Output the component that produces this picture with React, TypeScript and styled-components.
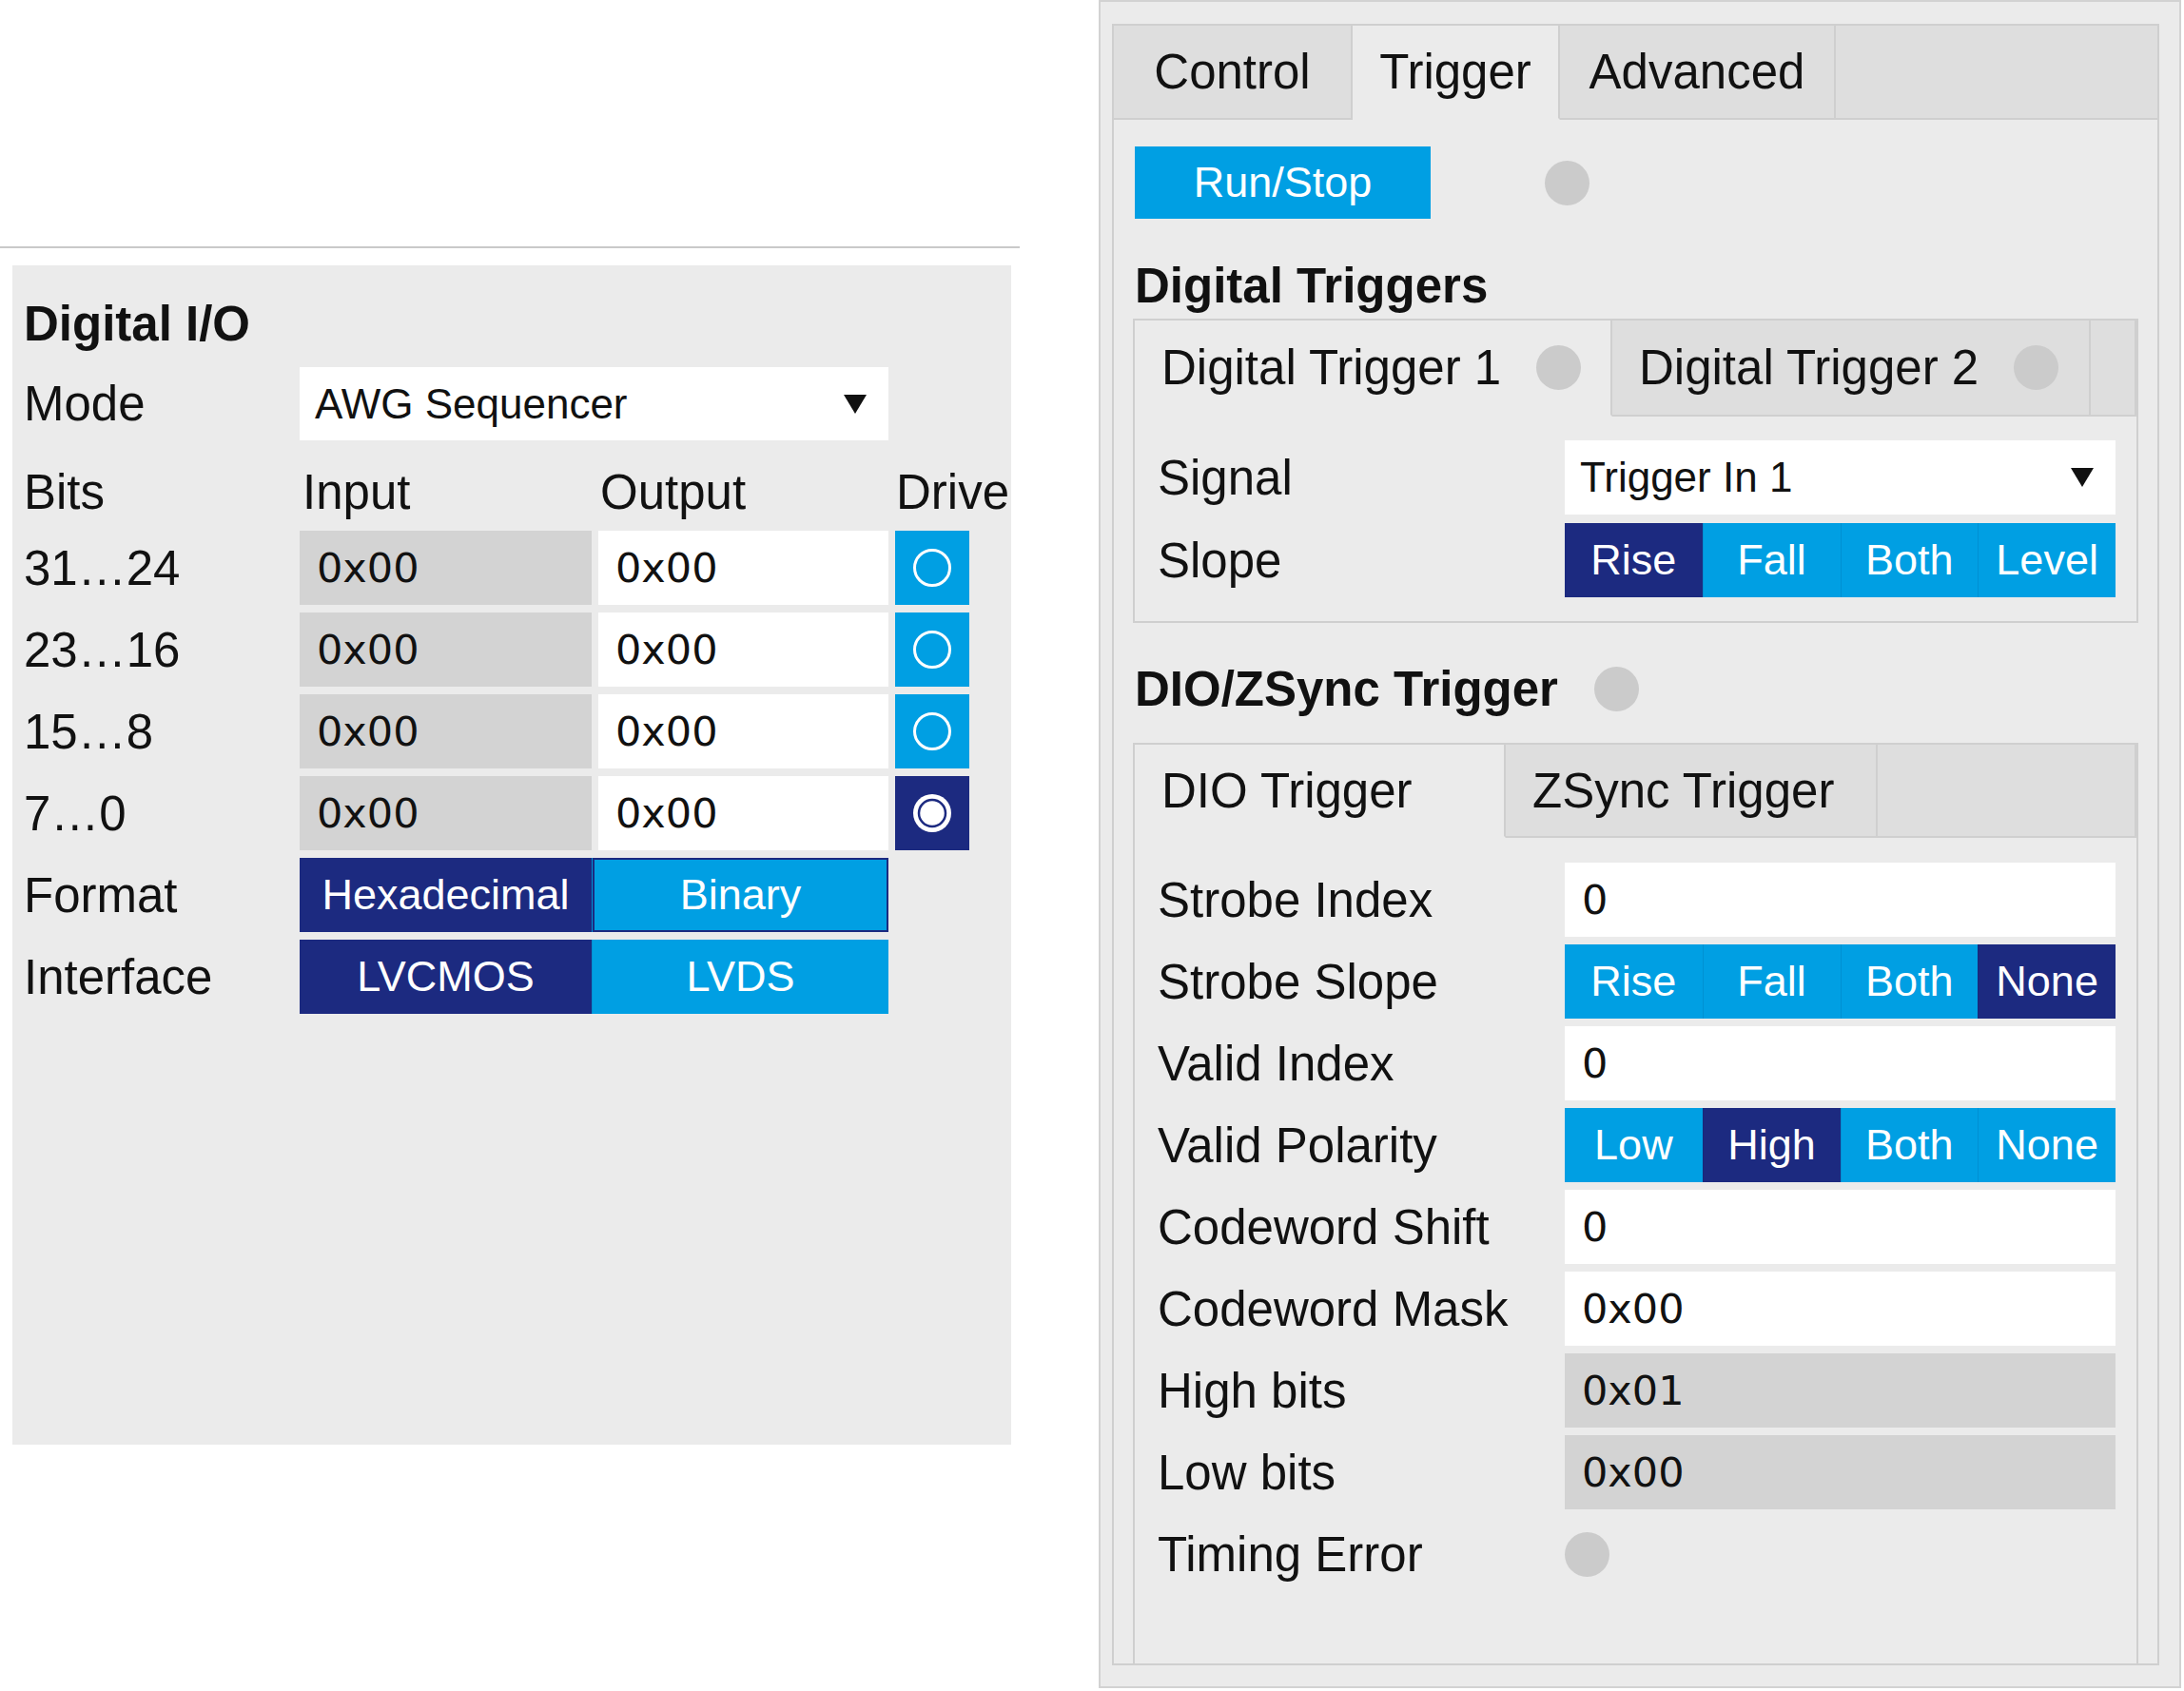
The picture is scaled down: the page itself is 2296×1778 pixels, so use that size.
import { Fragment } from 'react';
import styled, { createGlobalStyle } from 'styled-components';

const LIGHT = '#009fe3';
const DARK = '#1c2a80';
const PANEL = '#ebebeb';
const TAB_OFF = '#dedede';
const BORDER = '#cfcfcf';
const READONLY = '#d3d3d3';

const GlobalStyle = createGlobalStyle`
  html, body {
    margin: 0;
    padding: 0;
    background: #fff;
  }
  body {
    font-family: "Liberation Sans", Arial, sans-serif;
    color: #111;
  }
`;

const Page = styled.div`
  display: flex;
  align-items: flex-start;
  width: 2296px;
  height: 1778px;
  overflow: hidden;
`;

/* ---------- left: Digital I/O ---------- */

const LeftColumn = styled.div`
  width: 1072px;
  padding-top: 259px;
`;

const Rule = styled.div`
  height: 2px;
  background: #c9c9c9;
`;

const DioPanel = styled.section`
  box-sizing: border-box;
  width: 1050px;
  height: 1240px;
  margin: 18px 0 0 13px;
  padding: 32px 12px 0;
  background: ${PANEL};
`;

const PanelTitle = styled.h2`
  margin: 0 0 16px;
  font-size: 51px;
  line-height: 59px;
  font-weight: bold;
`;

const IoGrid = styled.div`
  display: grid;
  grid-template-columns: 283px 307px 305px 78px;
  grid-template-rows: 77px 79px repeat(6, 78px);
  column-gap: 7px;
  row-gap: 8px;
`;

const Label = styled.div`
  align-self: center;
  font-size: 51px;
  line-height: 59px;
  white-space: nowrap;
`;

const HeadLabel = styled(Label)<{ $shift?: number }>`
  align-self: end;
  padding: 0 0 3px ${(p) => p.$shift ?? 0}px;
`;

const Field = styled.div<{ $readOnly?: boolean }>`
  display: flex;
  align-items: center;
  padding-left: 18px;
  background: ${(p) => (p.$readOnly ? READONLY : '#fff')};
  font-family: "DejaVu Sans", Verdana, sans-serif;
  font-size: 43px;
  color: #111;
`;

const Select = styled.div<{ $span?: number }>`
  grid-column: span ${(p) => p.$span ?? 1};
  display: flex;
  align-items: center;
  justify-content: space-between;
  padding: 0 23px 0 16px;
  background: #fff;
  font-size: 44px;
`;

const DriveButton = styled.div<{ $on?: boolean }>`
  display: flex;
  align-items: center;
  justify-content: center;
  background: ${(p) => (p.$on ? DARK : LIGHT)};
`;

const SegGroup = styled.div<{ $cols: string; $span?: number }>`
  grid-column: span ${(p) => p.$span ?? 1};
  display: grid;
  grid-template-columns: ${(p) => p.$cols};
`;

const SegButton = styled.div<{ $active?: boolean; $focus?: boolean }>`
  display: flex;
  align-items: center;
  justify-content: center;
  background: ${(p) => (p.$active ? DARK : LIGHT)};
  color: #fff;
  font-size: 45px;
  box-shadow: ${(p) => (p.$focus ? `inset 0 0 0 2px ${DARK}` : 'none')};
  & + & {
    border-left: 1px solid rgba(0, 40, 90, 0.12);
  }
`;

/* ---------- right: tabs ---------- */

const RightPanel = styled.section`
  box-sizing: border-box;
  display: flex;
  flex-direction: column;
  width: 1138px;
  height: 1775px;
  margin-left: 83px;
  padding: 23px 21px 22px 12px;
  border: 2px solid #d2d2d2;
  background: ${PANEL};
`;

const TabBar = styled.div<{ $h: number }>`
  display: flex;
  flex: none;
  box-sizing: border-box;
  height: ${(p) => p.$h}px;
  border-top: 2px solid ${BORDER};
  border-left: 2px solid ${BORDER};
`;

const Tab = styled.div<{ $w: number; $active?: boolean; $centered?: boolean }>`
  box-sizing: border-box;
  display: flex;
  align-items: center;
  justify-content: ${(p) => (p.$centered ? 'center' : 'flex-start')};
  gap: 37px;
  width: ${(p) => p.$w}px;
  padding-left: ${(p) => (p.$centered ? 0 : 28)}px;
  background: ${(p) => (p.$active ? PANEL : TAB_OFF)};
  border-right: 2px solid ${BORDER};
  border-bottom: 2px solid ${(p) => (p.$active ? PANEL : BORDER)};
  font-size: 51px;
  white-space: nowrap;
`;

const TabFiller = styled.div`
  flex: 1;
  background: ${TAB_OFF};
  border-right: 2px solid ${BORDER};
  border-bottom: 2px solid ${BORDER};
`;

const TabBody = styled.div`
  flex: 1;
  display: flex;
  flex-direction: column;
  padding: 0 20px;
  border: 2px solid ${BORDER};
  border-top: none;
`;

const RunRow = styled.div`
  display: flex;
  align-items: center;
  gap: 120px;
  height: 76px;
  margin: 28px 0 0 2px;
`;

const RunButton = styled.div`
  display: flex;
  align-items: center;
  justify-content: center;
  width: 311px;
  height: 76px;
  background: ${LIGHT};
  color: #fff;
  font-size: 45px;
`;

const Led = styled.span`
  flex: none;
  width: 47px;
  height: 47px;
  border-radius: 50%;
  background: #cbcbcb;
`;

const SectionHeading = styled.h3<{ $top: number; $bottom: number }>`
  display: flex;
  align-items: center;
  gap: 38px;
  margin: ${(p) => p.$top}px 0 ${(p) => p.$bottom}px 2px;
  font-size: 51px;
  line-height: 59px;
  font-weight: bold;
`;

const SubPanel = styled.div<{ $fill?: boolean }>`
  display: flex;
  flex-direction: column;
  flex: ${(p) => (p.$fill ? 1 : 'none')};
  border-right: 2px solid ${BORDER};
  border-bottom: ${(p) => (p.$fill ? 'none' : `2px solid ${BORDER}`)};
`;

const FormGrid = styled.div<{ $gap: number; $top: number }>`
  display: grid;
  grid-template-columns: 428px 579px;
  grid-auto-rows: 78px;
  row-gap: ${(p) => p.$gap}px;
  padding: ${(p) => p.$top}px 20px 25px 24px;
  border-left: 2px solid ${BORDER};
  flex: 1;
  align-content: start;
`;

const LedCell = styled.div`
  display: flex;
  align-items: center;
`;

/* ---------- icons ---------- */

const Arrow = () => (
  <svg width="24" height="20" viewBox="0 0 24 20">
    <polygon points="0,0 24,0 12,20" fill="#111" />
  </svg>
);

const Radio = ({ on }: { on?: boolean }) => (
  <svg width="44" height="44" viewBox="0 0 44 44">
    {on ? (
      <>
        <circle cx="22" cy="22" r="20" fill="#fff" />
        <circle cx="22" cy="22" r="14" fill="#fff" stroke={DARK} strokeWidth="2.5" />
      </>
    ) : (
      <circle cx="22" cy="22" r="18.5" fill="none" stroke="#fff" strokeWidth="3" />
    )}
  </svg>
);

const bitRows = [
  { bits: '31…24', drive: false },
  { bits: '23…16', drive: false },
  { bits: '15…8', drive: false },
  { bits: '7…0', drive: true },
];

const Segments = ({ items, active, span }: { items: string[]; active: number; span?: number }) => (
  <SegGroup $cols={`repeat(${items.length}, 1fr)`} $span={span}>
    {items.map((t, i) => (
      <SegButton key={t} $active={i === active}>
        {t}
      </SegButton>
    ))}
  </SegGroup>
);

export default function App() {
  return (
    <>
      <GlobalStyle />
      <Page>
        <LeftColumn>
          <Rule />
          <DioPanel>
            <PanelTitle>Digital I/O</PanelTitle>
            <IoGrid>
              <Label>Mode</Label>
              <Select $span={2}>
                AWG Sequencer
                <Arrow />
              </Select>
              <div />

              <HeadLabel>Bits</HeadLabel>
              <HeadLabel $shift={3}>Input</HeadLabel>
              <HeadLabel $shift={2}>Output</HeadLabel>
              <HeadLabel $shift={1}>Drive</HeadLabel>

              {bitRows.map((r) => (
                <Fragment key={r.bits}>
                  <Label>{r.bits}</Label>
                  <Field $readOnly>0x00</Field>
                  <Field>0x00</Field>
                  <DriveButton $on={r.drive}>
                    <Radio on={r.drive} />
                  </DriveButton>
                </Fragment>
              ))}

              <Label>Format</Label>
              <SegGroup $cols="307px 1fr" $span={2}>
                <SegButton $active>Hexadecimal</SegButton>
                <SegButton $focus>Binary</SegButton>
              </SegGroup>
              <div />

              <Label>Interface</Label>
              <SegGroup $cols="307px 1fr" $span={2}>
                <SegButton $active>LVCMOS</SegButton>
                <SegButton>LVDS</SegButton>
              </SegGroup>
              <div />
            </IoGrid>
          </DioPanel>
        </LeftColumn>

        <RightPanel>
          <TabBar $h={101}>
            <Tab $w={251} $centered>Control</Tab>
            <Tab $w={218} $centered $active>Trigger</Tab>
            <Tab $w={290} $centered>Advanced</Tab>
            <TabFiller />
          </TabBar>
          <TabBody>
            <RunRow>
              <RunButton>Run/Stop</RunButton>
              <Led />
            </RunRow>

            <SectionHeading $top={41} $bottom={5}>Digital Triggers</SectionHeading>
            <SubPanel>
              <TabBar $h={103}>
                <Tab $w={502} $active>
                  Digital Trigger 1
                  <Led />
                </Tab>
                <Tab $w={503}>
                  Digital Trigger 2
                  <Led />
                </Tab>
                <TabFiller />
              </TabBar>
              <FormGrid $gap={9} $top={25}>
                <Label>Signal</Label>
                <Select>
                  Trigger In 1
                  <Arrow />
                </Select>
                <Label>Slope</Label>
                <Segments items={['Rise', 'Fall', 'Both', 'Level']} active={0} />
              </FormGrid>
            </SubPanel>

            <SectionHeading $top={40} $bottom={27}>
              DIO/ZSync Trigger
              <Led />
            </SectionHeading>
            <SubPanel $fill>
              <TabBar $h={100}>
                <Tab $w={390} $active>DIO Trigger</Tab>
                <Tab $w={391}>ZSync Trigger</Tab>
                <TabFiller />
              </TabBar>
              <FormGrid $gap={8} $top={26}>
                <Label>Strobe Index</Label>
                <Field>0</Field>
                <Label>Strobe Slope</Label>
                <Segments items={['Rise', 'Fall', 'Both', 'None']} active={3} />
                <Label>Valid Index</Label>
                <Field>0</Field>
                <Label>Valid Polarity</Label>
                <Segments items={['Low', 'High', 'Both', 'None']} active={1} />
                <Label>Codeword Shift</Label>
                <Field>0</Field>
                <Label>Codeword Mask</Label>
                <Field>0x00</Field>
                <Label>High bits</Label>
                <Field $readOnly>0x01</Field>
                <Label>Low bits</Label>
                <Field $readOnly>0x00</Field>
                <Label>Timing Error</Label>
                <LedCell>
                  <Led />
                </LedCell>
              </FormGrid>
            </SubPanel>
          </TabBody>
        </RightPanel>
      </Page>
    </>
  );
}
